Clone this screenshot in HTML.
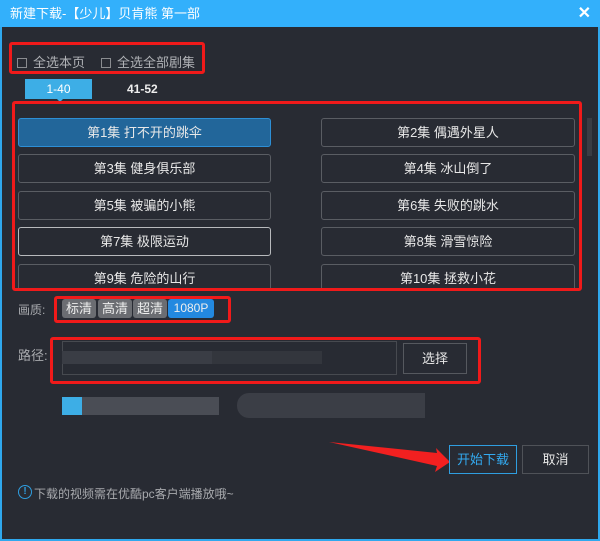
<!DOCTYPE html>
<html><head><meta charset="utf-8"><style>
*{margin:0;padding:0;box-sizing:border-box}
body{width:600px;height:541px;overflow:hidden;background:#282b33;font-family:"Liberation Sans","Noto Sans CJK SC",sans-serif;color:#e6e6e6;font-size:12px;position:relative}
.abs{position:absolute}
.win{left:0;top:0;width:600px;height:541px;border:2px solid #2fa8ee;border-top:none}
.title{left:0;top:0;width:600px;height:27px;background:#33b0fb;color:#fff;font-size:13px;line-height:27px;padding-left:10px}
.red{border:3px solid #f01a1a;border-radius:3px}
.ep{height:29px;border:1px solid #5a5d63;border-radius:3px;text-align:center;line-height:27px;font-size:13px;color:#e8e8e8}
.q{top:299px;height:19px;line-height:19px;text-align:center;background:#6b6d72;border-radius:3px;color:#eee;font-size:13px}
.cb{width:10px;height:10px;border:1px solid #8a8c90;display:inline-block;vertical-align:-1px;margin-right:6px}
</style></head><body>
<div class="abs win"></div>
<div class="abs title">新建下载-【少儿】贝肯熊 第一部<span style="position:absolute;right:9px;top:0;font-size:16px;font-weight:bold">✕</span></div>

<div class="abs red" style="left:9px;top:42px;width:196px;height:32px"></div>
<div class="abs" style="left:17px;top:52px;color:#b0b2b6;font-size:13px"><span class="cb"></span>全选本页</div>
<div class="abs" style="left:101px;top:52px;color:#b0b2b6;font-size:13px"><span class="cb"></span>全选全部剧集</div>

<div class="abs" style="left:25px;top:79px;width:67px;height:20px;background:#3daee6;color:#fff;text-align:center;line-height:20px;font-size:12px">1-40</div>
<div class="abs" style="left:57px;top:99px;width:0;height:0;border:3px solid transparent;border-top-color:#3daee6"></div>
<div class="abs" style="left:127px;top:82px;font-size:12px;color:#eee;font-weight:bold">41-52</div>

<div class="abs red" style="left:12px;top:101px;width:570px;height:190px"></div>
<div class="abs" style="left:587px;top:118px;width:5px;height:38px;background:#3a3d44"></div>
<div class="abs" style="left:15px;top:104px;width:564px;height:184px;overflow:hidden">
<div class="abs ep" style="left:3px;top:14px;width:253px;background:#22669a;border-color:#2d8fd6">第1集 打不开的跳伞</div>
<div class="abs ep" style="left:306px;top:14px;width:254px">第2集 偶遇外星人</div>
<div class="abs ep" style="left:3px;top:50px;width:253px">第3集 健身俱乐部</div>
<div class="abs ep" style="left:306px;top:50px;width:254px">第4集 冰山倒了</div>
<div class="abs ep" style="left:3px;top:87px;width:253px">第5集 被骗的小熊</div>
<div class="abs ep" style="left:306px;top:87px;width:254px">第6集 失败的跳水</div>
<div class="abs ep" style="left:3px;top:123px;width:253px;border-color:#b8babd">第7集 极限运动</div>
<div class="abs ep" style="left:306px;top:123px;width:254px">第8集 滑雪惊险</div>
<div class="abs ep" style="left:3px;top:160px;width:253px">第9集 危险的山行</div>
<div class="abs ep" style="left:306px;top:160px;width:254px">第10集 拯救小花</div>
</div>

<div class="abs" style="left:18px;top:301px;color:#a8aaae">画质:</div>
<div class="abs red" style="left:54px;top:296px;width:177px;height:27px"></div>
<div class="abs q" style="left:62px;width:34px">标清</div>
<div class="abs q" style="left:98px;width:34px">高清</div>
<div class="abs q" style="left:133px;width:34px">超清</div>
<div class="abs q" style="left:168px;width:46px;background:#2389e0;font-size:12px">1080P</div>

<div class="abs" style="left:18px;top:345px;color:#a8aaae;font-size:13px">路径:</div>
<div class="abs red" style="left:50px;top:337px;width:431px;height:47px"></div>
<div class="abs" style="left:62px;top:341px;width:335px;height:34px;border:1px solid #474a50"></div>
<div class="abs" style="left:62px;top:351px;width:150px;height:13px;background:#3a3d45"></div>
<div class="abs" style="left:212px;top:351px;width:110px;height:13px;background:#33363d"></div>
<div class="abs" style="left:403px;top:343px;width:64px;height:31px;border:1px solid #56595f;text-align:center;line-height:29px;color:#e6e6e6;font-size:13px">选择</div>

<div class="abs" style="left:62px;top:397px;width:157px;height:18px;background:#4a4d55"></div>
<div class="abs" style="left:62px;top:397px;width:20px;height:18px;background:#3daee6"></div>
<div class="abs" style="left:237px;top:393px;width:188px;height:25px;background:#3b3e46;border-radius:12px 0 0 12px"></div>

<svg class="abs" style="left:0;top:0" width="600" height="541">
<path d="M329 442 L437 453 L436 448 L450 462 L435 472 L437 466 Z" fill="#f22020"/>
</svg>
<div class="abs" style="left:449px;top:445px;width:68px;height:29px;border:1px solid #2f9ee0;color:#33aaf0;text-align:center;line-height:27px;font-size:13px">开始下载</div>
<div class="abs" style="left:522px;top:445px;width:67px;height:29px;border:1px solid #4f5258;color:#e6e6e6;text-align:center;line-height:27px;font-size:13px">取消</div>

<div class="abs" style="left:18px;top:485px;width:14px;height:14px;border:1.5px solid #2f9ee0;border-radius:50%;color:#2f9ee0;font-size:10px;line-height:11px;text-align:center;font-weight:bold">!</div>
<div class="abs" style="left:34px;top:485px;color:#a8aaae;font-size:12px">下载的视频需在优酷pc客户端播放哦~</div>
</body></html>
